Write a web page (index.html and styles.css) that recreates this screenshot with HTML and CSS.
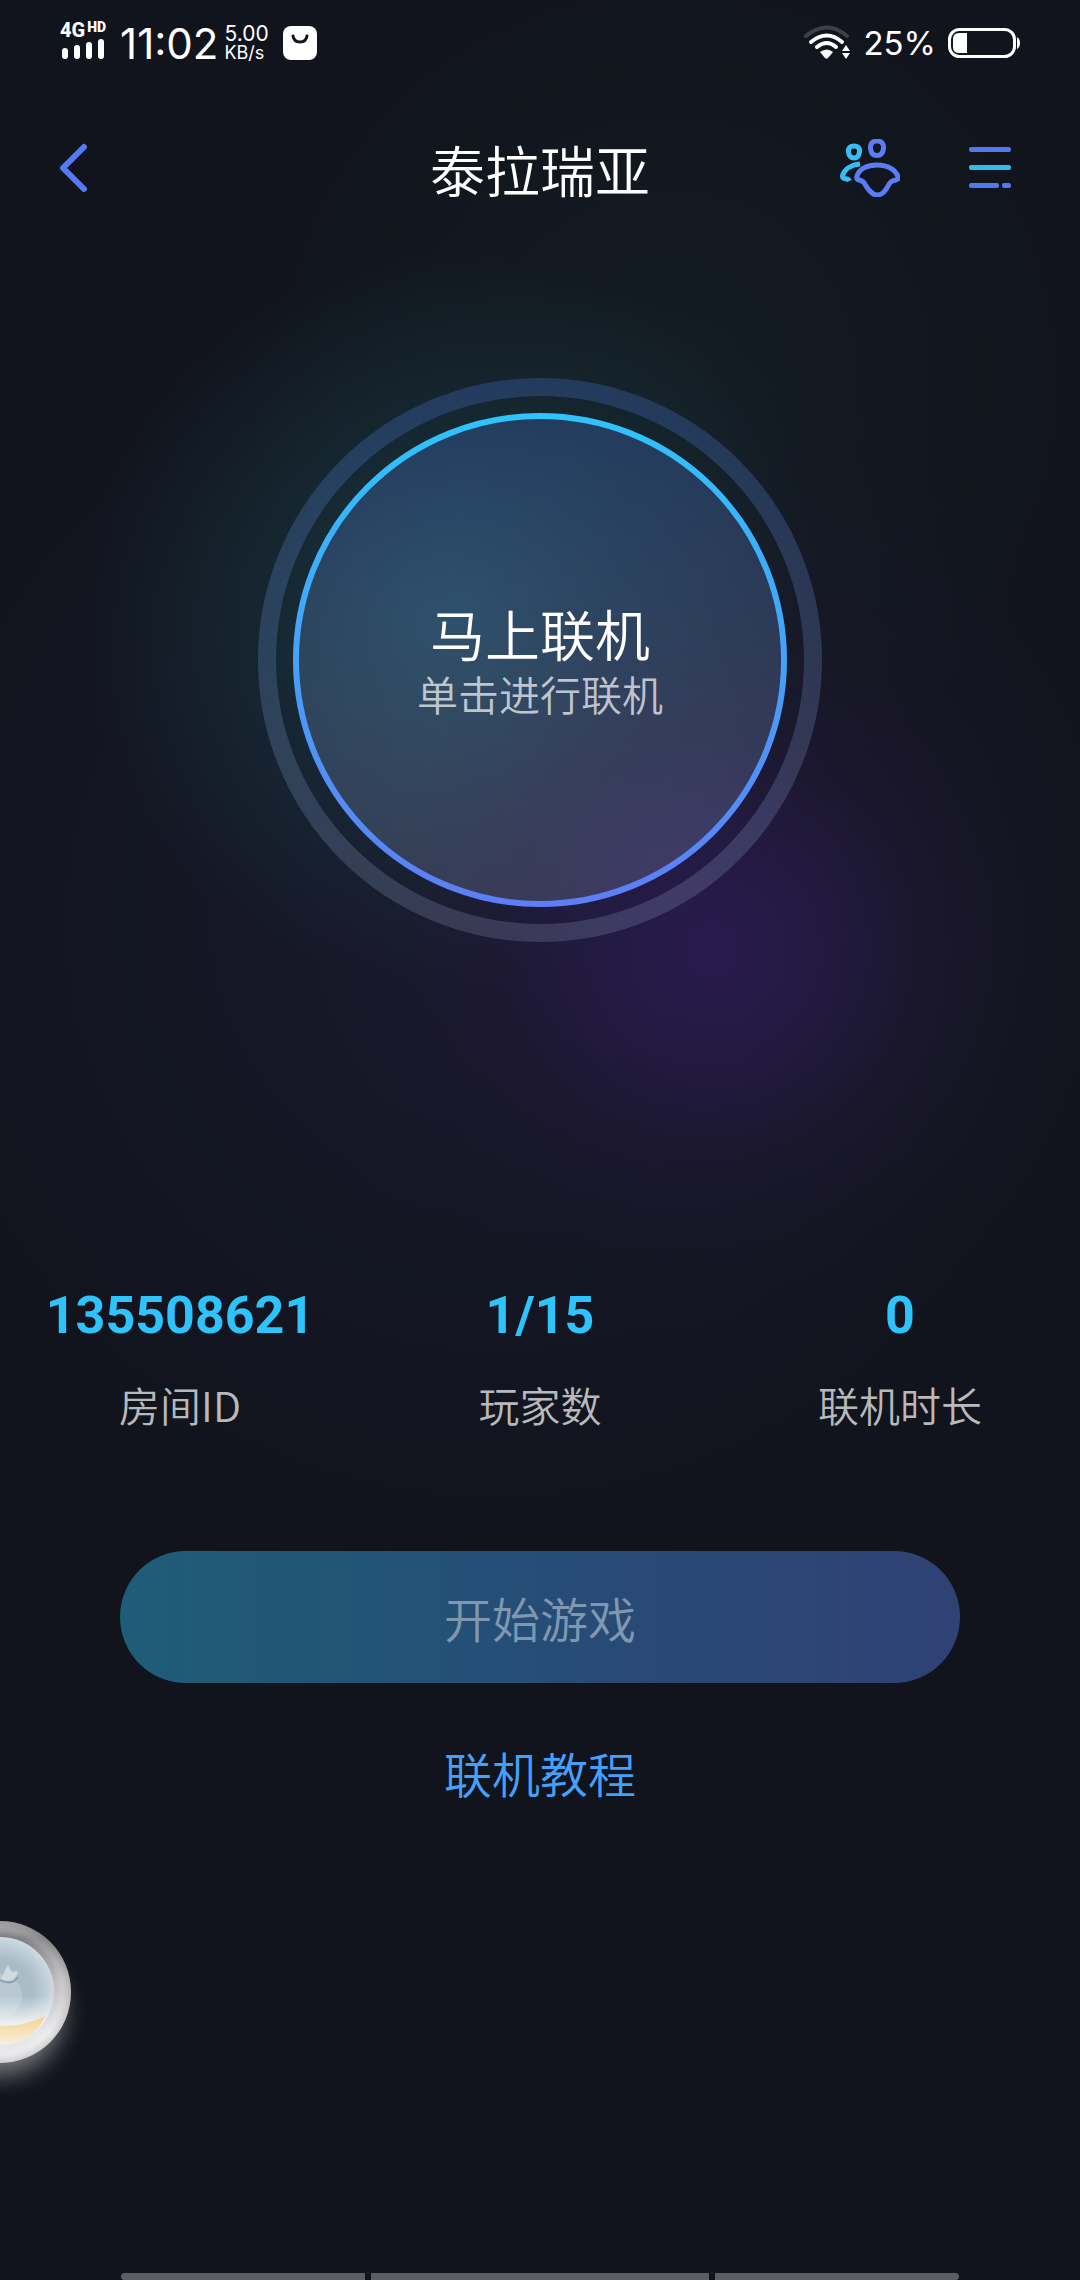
FILE: index.html
```html
<!DOCTYPE html>
<html lang="zh-CN">
<head>
  <meta charset="UTF-8" />
  <meta name="viewport" content="width=device-width, initial-scale=1.0" />
  <title>泰拉瑞亚</title>
  <link rel="stylesheet" href="styles.css">
</head>
<body>
  <div class="status-bar">
    <div class="status-left">
      <div class="signal">
        <div class="network">4G<span>HD</span></div>
        <svg width="44" height="20" viewBox="0 0 44 20" fill="#fff">
          <rect x="2" y="9" width="6" height="11" rx="3"/>
          <rect x="14" y="6" width="6" height="14" rx="3"/>
          <rect x="26" y="3" width="6" height="17" rx="3"/>
          <rect x="38" y="0" width="6" height="20" rx="3"/>
        </svg>
      </div>
      <div class="clock">11:02</div>
      <div class="speed"><span>5.00</span><small>KB/s</small></div>
      <svg class="app-icon" width="34" height="34" viewBox="0 0 34 34" fill="none">
        <rect width="34" height="34" rx="8" fill="#fff"/>
        <path d="M10 10q1 6 7 6t7-6" stroke="#11141c" stroke-width="3" stroke-linecap="round"/>
      </svg>
    </div>
    <div class="status-right">
      <svg class="wifi" width="48" height="36" viewBox="0 0 48 36" fill="none" stroke="#fff" stroke-width="4" stroke-linecap="round">
        <path d="M3 11Q24-6 44 11" stroke="#3d4048"/>
        <path d="M8 17Q24 4 39 17"/>
        <path d="M14 22Q24 14 33 22"/>
        <path d="M17 27q7-5 13 0l-5 6q-1.500 1.500-3 0z" fill="#fff" stroke="none"/>
        <path d="M43 20l4 6h-8zM43 34l-4-6h8z" fill="#fff" stroke="none"/>
      </svg>
      <div class="percent">25%</div>
      <svg width="72" height="30" viewBox="0 0 72 30" fill="none">
        <rect x="1.500" y="1.500" width="65" height="27" rx="10" stroke="#fff" stroke-width="3"/>
        <path d="M19 5v20h-8q-6 0-6-6v-8q0-6 6-6z" fill="#fff"/>
        <path d="M69 9q3 2 3 6t-3 6z" fill="#fff"/>
      </svg>
    </div>
  </div>

  <header>
    <button class="icon-button back" aria-label="返回">
      <svg width="30" height="50" viewBox="0 0 30 50" fill="none" stroke="#557af5" stroke-width="6" stroke-linecap="round" stroke-linejoin="round">
        <path d="M26 4L5 25L26 46"/>
      </svg>
    </button>
    <h1>泰拉瑞亚</h1>
    <div class="header-actions">
      <button class="icon-button" aria-label="玩家">
        <svg width="60" height="58" viewBox="0 0 60 58" fill="none" stroke-width="5" stroke-linejoin="round">
          <path d="M14 7c4 0 6 2 5.500 6c-.5 4-2 6-5.500 6s-5-2-5.500-6c-.5-4 1.500-6 5.500-6z" stroke="#36bdf4"/>
          <path d="M20 25C10 26 4 31 2.500 37q0 2 2 2.500q4 .5 5 2.500" stroke="#36bdf4"/>
          <path d="M37 2c5 0 7 3 6.500 7.500c-.6 5-3 7-6.500 7s-6-2-6.500-7C30 5 32 2 37 2z" stroke="#5b7cf3"/>
          <path d="M37 26c11 0 19 5 21 12q1 2-2 3c-5 1-6 2-8 6c-3 6-7 9-11 9s-7-3-11-9c-2-4-3-5-7-6q-3-1-2-4c2-7 10-11 20-11z" stroke="#5b7cf3"/>
        </svg>
      </button>
      <button class="icon-button" aria-label="菜单">
        <svg width="42" height="42" viewBox="0 0 42 42">
          <rect width="42" height="5" rx="2" fill="#5277ee"/>
          <rect y="18" width="42" height="5" rx="2" fill="#36b7ee"/>
          <rect y="36" width="30" height="5" rx="2" fill="#5277ee"/>
          <rect x="33" y="36" width="9" height="5" rx="2" fill="#5277ee"/>
        </svg>
      </button>
    </div>
  </header>

  <main>
    <button class="connect">
      <svg class="rings" viewBox="0 0 564 564" fill="none">
        <defs>
          <linearGradient id="disc" x1="0" y1="0" x2="0" y2="1">
            <stop offset="0" stop-color="#4470d0" stop-opacity=".3"/>
            <stop offset=".5" stop-color="#7097d8" stop-opacity=".25"/>
            <stop offset="1" stop-color="#b8c8f0" stop-opacity=".18"/>
          </linearGradient>
          <linearGradient id="edge" x1="0" y1="0" x2="0" y2="1">
            <stop offset="0" stop-color="#2fc3fb"/>
            <stop offset="1" stop-color="#5d7ef6"/>
          </linearGradient>
        </defs>
        <circle cx="282" cy="282" r="273" stroke="url(#disc)" stroke-width="18"/>
        <circle cx="282" cy="282" r="244" fill="url(#disc)" stroke="url(#edge)" stroke-width="6"/>
      </svg>
      <span class="connect-title">马上联机</span>
      <span class="connect-hint">单击进行联机</span>
    </button>

    <dl class="stats">
      <div class="stat">
        <dt>房间ID</dt>
        <dd>135508621</dd>
      </div>
      <div class="stat">
        <dt>玩家数</dt>
        <dd>1/15</dd>
      </div>
      <div class="stat">
        <dt>联机时长</dt>
        <dd>0</dd>
      </div>
    </dl>

    <button class="start" disabled>开始游戏</button>
    <a class="tutorial" href="#">联机教程</a>
  </main>

  <!-- floating assistant, half off the left edge -->
  <button class="assistant" aria-label="悬浮球">
    <svg width="142" height="142" viewBox="1 1 142 142">
      <defs>
        <linearGradient id="rim" x1="0" y1="0" x2="0" y2="1">
          <stop offset="0" stop-color="#9b9898"/>
          <stop offset=".12" stop-color="#77767a"/>
          <stop offset=".4" stop-color="#b9b6b8"/>
          <stop offset=".8" stop-color="#e8e8ea"/>
          <stop offset="1" stop-color="#e4e4e7"/>
        </linearGradient>
        <radialGradient id="shade">
          <stop offset=".76" stop-color="#fff" stop-opacity="0"/>
          <stop offset=".88" stop-color="#fff" stop-opacity=".2"/>
          <stop offset="1" stop-color="#999" stop-opacity=".3"/>
        </radialGradient>
        <radialGradient id="glass" cx=".5" cy=".5" r=".5">
          <stop offset="0" stop-color="#a9bdc8"/>
          <stop offset=".6" stop-color="#a9bdc8"/>
          <stop offset=".85" stop-color="#bfced7"/>
          <stop offset="1" stop-color="#cfdbe3"/>
        </radialGradient>
        <linearGradient id="haze" x1="0" y1="0" x2="0" y2="1">
          <stop offset=".55" stop-color="#eef1f4" stop-opacity="0"/>
          <stop offset=".8" stop-color="#eef1f4"/>
        </linearGradient>
        <linearGradient id="sand" x1="0" y1="0" x2="0" y2="1">
          <stop offset="0" stop-color="#f5d391"/>
          <stop offset="1" stop-color="#f8eedb"/>
        </linearGradient>
      </defs>
      <circle cx="72" cy="72" r="71" fill="url(#rim)"/>
      <circle cx="72" cy="72" r="71" fill="url(#shade)"/>
      <circle cx="72" cy="71" r="54" fill="url(#glass)"/>
      <circle cx="72" cy="76" r="22" fill="#b9c9d3"/>
      <circle cx="72" cy="71" r="54" fill="url(#haze)"/>
      <path d="M28 105Q40 112 72 106Q98 106 117 96Q106 123 72 124Q42 122 28 105z" fill="url(#sand)"/>
      <path d="M72 60L80 45L84 52L90 51Q88 63 76 61z" fill="#d0dae1"/>
      <path d="M72 60Q84 66 90 57" fill="none" stroke="#8fa4b0" stroke-width="2"/>
    </svg>
  </button>

  <footer class="nav-hints">
    <span></span>
    <span></span>
    <span></span>
  </footer>
</body>
</html>
```
FILE: styles.css
```css
* {
  box-sizing: border-box;
}
body {
  margin: 0;
  min-height: 100vh;
  display: flex;
  flex-direction: column;
  position: relative;
  overflow-x: hidden;
  font-family: Roboto, "Noto Sans CJK SC", sans-serif;
  font-weight: 350;
  color: #fff;
  background:
    radial-gradient(circle 320px at 66% 950px, rgba(46, 28, 90, 0.75), rgba(40, 28, 80, 0.6) 35%, rgba(34, 24, 62, 0.3) 65%, transparent),
    radial-gradient(circle 440px at 65% 900px, rgba(38, 22, 52, 0.4), transparent),
    radial-gradient(circle 370px at 42% 620px, rgba(30, 84, 94, 0.6), rgba(24, 64, 72, 0.4) 50%, transparent),
    radial-gradient(circle 420px at 62% 380px, rgba(24, 48, 50, 0.3), transparent),
    radial-gradient(circle 640px at 46% 920px, rgba(28, 28, 56, 0.6), transparent),
    #11141c;
}
button {
  padding: 0;
  border: none;
  background: none;
  color: inherit;
  font: inherit;
  cursor: pointer;
}
svg {
  display: block;
}

.status-bar {
  display: flex;
  justify-content: space-between;
  height: 86px;
  padding: 0 60px;
  font-family: Inter, sans-serif;
  font-weight: 400;
}
.status-left,
.status-right {
  display: flex;
  align-items: center;
}
.signal {
  padding-bottom: 6px;
}
.network {
  display: flex;
  height: 17px;
  font-size: 20px;
  line-height: 17px;
  font-weight: 800;
  font-family: Roboto, sans-serif;
}
.network span {
  margin-left: 2px;
  font-size: 14px;
  line-height: 10px;
  font-weight: 900;
}
.clock {
  margin-left: 14px;
  font-size: 42px;
}
.speed {
  display: flex;
  flex-direction: column;
  margin: 0 14px 0 6px;
  font-size: 21px;
  line-height: 19px;
}
.speed small {
  font-size: 18px;
}
.wifi {
  margin-right: 12px;
}
.percent {
  margin-right: 12px;
  font-size: 33px;
}

header {
  display: grid;
  grid-template-columns: 1fr auto 1fr;
  align-items: center;
  height: 164px;
  padding: 0 69px 0 58px;
}
.back {
  justify-self: start;
}
h1 {
  margin: 0;
  padding-left: 11px;
  font-size: 55px;
  font-weight: 350;
}
.header-actions {
  display: flex;
  align-items: center;
  justify-content: flex-end;
  gap: 69px;
}

main {
  flex: 1;
  display: flex;
  flex-direction: column;
  align-items: center;
}
.connect {
  position: relative;
  display: flex;
  flex-direction: column;
  align-items: center;
  justify-content: center;
  width: 564px;
  height: 564px;
  margin-top: 128px;
  padding-top: 10px;
  border-radius: 50%;
}
.rings {
  position: absolute;
  inset: 0;
}
.connect-title,
.connect-hint {
  position: relative;
}
.connect-title {
  font-size: 55px;
  line-height: 64px;
}
.connect-hint {
  font-size: 41px;
  line-height: 56px;
  color: rgba(255, 255, 255, 0.7);
}

.stats {
  display: grid;
  grid-template-columns: repeat(3, 1fr);
  width: 100%;
  margin: 342px 0 0;
}
.stat {
  display: flex;
  flex-direction: column-reverse;
  align-items: center;
  gap: 26px;
}
.stat dt {
  font-family: "Noto Sans CJK SC", sans-serif;
  font-size: 41px;
  line-height: 60px;
  color: #b8b9bb;
}
.stat dd {
  margin: 0;
  font-size: 52px;
  line-height: 64px;
  font-weight: 700;
  color: #2fc3fb;
}

.start {
  width: calc(100% - 240px);
  height: 132px;
  margin-top: 117px;
  border-radius: 66px;
  background: linear-gradient(90deg, #1e5d77, #264d76 50%, #304175);
  color: #7f98b0;
  font-size: 48px;
}
.tutorial {
  margin-top: 60px;
  font-size: 48px;
  line-height: 68px;
  color: #45a0fa;
  text-decoration: none;
}

.assistant {
  position: absolute;
  left: -71px;
  top: 1921px;
  border-radius: 50%;
  box-shadow: 0 20px 24px -8px rgba(255, 255, 255, 0.45);
}

.nav-hints {
  display: grid;
  grid-template-columns: 244fr 338fr 244fr;
  gap: 6px;
  height: 7px;
  padding: 0 121px;
}
.nav-hints span {
  background: #5c5d62;
}
.nav-hints span:first-child {
  border-radius: 4px 0 0 4px;
}
.nav-hints span:last-child {
  border-radius: 0 4px 4px 0;
}
```
